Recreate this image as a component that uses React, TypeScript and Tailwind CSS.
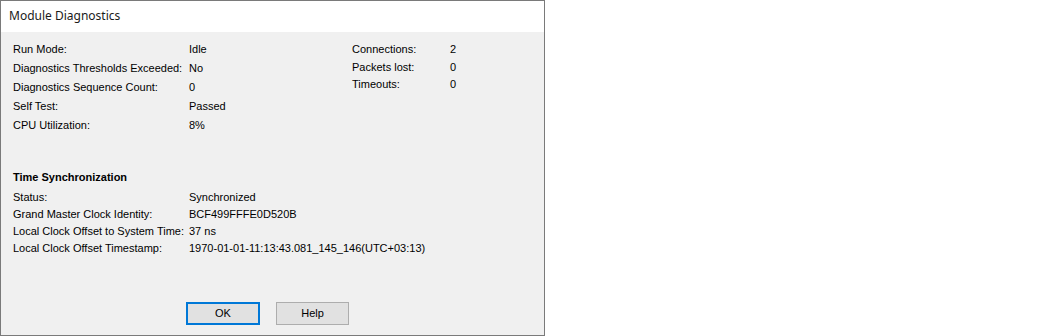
const general = [
  { label: "Run Mode:", value: "Idle" },
  { label: "Diagnostics Thresholds Exceeded:", value: "No" },
  { label: "Diagnostics Sequence Count:", value: "0" },
  { label: "Self Test:", value: "Passed" },
  { label: "CPU Utilization:", value: "8%" },
];

const network = [
  { label: "Connections:", value: "2", h: "h-[19px]" },
  { label: "Packets lost:", value: "0", h: "h-[17px]" },
  { label: "Timeouts:", value: "0", h: "h-[17px]" },
];

const timeSync = [
  { label: "Status:", value: "Synchronized" },
  { label: "Grand Master Clock Identity:", value: "BCF499FFFE0D520B" },
  { label: "Local Clock Offset to System Time:", value: "37 ns" },
  { label: "Local Clock Offset Timestamp:", value: "1970-01-01-11:13:43.081_145_146(UTC+03:13)" },
];

export default function App() {
  return (
    <div className="flex h-[336px] w-[1050px] bg-white">
      <div className="flex h-[336px] w-[545px] flex-col border border-[#7a7a7a] bg-[#f0f0f0] text-[11px] text-black [font-family:'Liberation_Sans',Arial,sans-serif]">
        {/* title bar */}
        <div className="flex h-[31px] items-center bg-white pl-[8px] pb-[2px] text-[12px] text-[#1a1a1a] [font-family:'Noto_Sans',sans-serif]">
          Module Diagnostics
        </div>

        <div className="flex flex-1 flex-col pl-[12px] pt-[8px]">
          <div className="flex">
            <div className="flex w-[339px] flex-col">
              {general.map((row) => (
                <div key={row.label} className="flex h-[19px] items-center">
                  <span className="w-[176px]">{row.label}</span>
                  <span>{row.value}</span>
                </div>
              ))}
            </div>
            <div className="flex flex-col">
              {network.map((row) => (
                <div key={row.label} className={`flex items-center ${row.h}`}>
                  <span className="w-[98px]">{row.label}</span>
                  <span>{row.value}</span>
                </div>
              ))}
            </div>
          </div>

          <div className="mt-[33px] flex h-[19px] items-center font-bold">Time Synchronization</div>
          <div className="flex flex-col pt-[2px]">
            {timeSync.map((row) => (
              <div key={row.label} className="flex h-[17px] items-center">
                <span className="w-[176px]">{row.label}</span>
                <span>{row.value}</span>
              </div>
            ))}
          </div>

          <div className="mt-auto flex gap-[16px] pb-[10px] pl-[173px]">
            <button className="h-[23px] w-[74px] border-2 border-[#0078d7] bg-[#e1e1e1] text-[11px]">OK</button>
            <button className="h-[23px] w-[73px] border border-[#adadad] bg-[#e1e1e1] text-[11px]">Help</button>
          </div>
        </div>
      </div>
    </div>
  );
}
